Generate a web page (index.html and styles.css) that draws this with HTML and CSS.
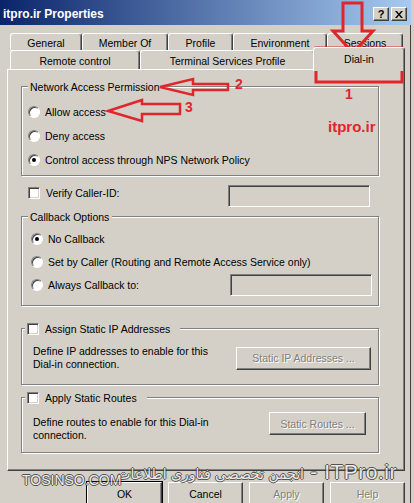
FILE: index.html
```html
<!DOCTYPE html>
<html lang="en">
<head>
    <meta charset="UTF-8">
    <meta name="viewport" content="width=device-width, initial-scale=1.0">
    <title>itpro.ir Properties</title>
    <link rel="stylesheet" href="styles.css">
</head>
<body>
    <div class="dialog">
        <div class="titlebar">
            <span class="title">itpro.ir Properties</span>
            <div class="caption-btns">
                <span class="cap-btn">?</span>
                <span class="cap-btn">
                    <svg width="8" height="7" viewBox="0 0 8 7"><path d="M0 0h2l2 2.5L6 0h2L5 3.5 8 7H6L4 4.5 2 7H0l3-3.5z" fill="#000"/></svg>
                </span>
            </div>
        </div>

        <div class="tabs">
            <div class="tab-row back">
                <div class="tab t-general">General</div>
                <div class="tab t-member">Member Of</div>
                <div class="tab t-profile">Profile</div>
                <div class="tab t-env">Environment</div>
                <div class="tab t-sessions">Sessions</div>
            </div>
            <div class="tab-row front">
                <div class="tab t-remote">Remote control</div>
                <div class="tab t-terminal">Terminal Services Profile</div>
                <div class="tab t-dialin selected">Dial-in</div>
            </div>
        </div>

        <div class="panel">
            <div class="group g-access">
                <div class="legend">Network Access Permission</div>
                <div class="options">
                    <div class="opt"><span class="radio"></span>Allow access</div>
                    <div class="opt"><span class="radio"></span>Deny access</div>
                    <div class="opt"><span class="radio on"></span>Control access through NPS Network Policy</div>
                </div>
            </div>

            <div class="verify-row">
                <div class="check-label"><span class="check"></span>Verify Caller-ID:</div>
                <div class="field"></div>
            </div>

            <div class="group g-callback">
                <div class="legend">Callback Options</div>
                <div class="options">
                    <div class="opt"><span class="radio on"></span>No Callback</div>
                    <div class="opt"><span class="radio"></span>Set by Caller (Routing and Remote Access Service only)</div>
                    <div class="opt"><span class="radio"></span>Always Callback to:<div class="field callback-field"></div></div>
                </div>
            </div>

            <div class="group g-static-ip">
                <div class="legend check-legend"><span class="check"></span>Assign Static IP Addresses</div>
                <div class="group-body">
                    <div class="desc">Define IP addresses to enable for this<br>Dial-in connection.</div>
                    <div class="btn disabled btn-ip">Static IP Addresses ...</div>
                </div>
            </div>

            <div class="group g-routes">
                <div class="legend check-legend"><span class="check"></span>Apply Static Routes</div>
                <div class="group-body">
                    <div class="desc">Define routes to enable for this Dial-in<br>connection.</div>
                    <div class="btn disabled btn-routes">Static Routes ...</div>
                </div>
            </div>
        </div>

        <div class="actions">
            <div class="btn default">OK</div>
            <div class="btn">Cancel</div>
            <div class="btn disabled">Apply</div>
            <div class="btn disabled">Help</div>
        </div>

        <div class="watermark">
            <div class="wm-line"><span class="wm-fa">انجمن تخصصی فناوری اطلاعات</span><span class="wm-en"> - ITPro.ir</span></div>
            <div class="wm-site">TOSINSO.COM</div>
        </div>

        <svg class="annotations" width="414" height="503" viewBox="0 0 414 503">
            <g fill="none" stroke="#e0262d" stroke-width="3" stroke-linejoin="miter">
                <path d="M343 3H362V31H373L353 53L333 31H343Z"/>
                <rect x="316" y="48" width="86" height="34"/>
                <path d="M160 87L193 79V84H228V90H193V95Z" stroke-width="2.5"/>
                <path d="M108 111L142 100V104H180V114H142V121Z" stroke-width="2.5"/>
            </g>
            <g fill="#e0262d" font-family="Liberation Sans, Arial, sans-serif" font-weight="bold">
                <text x="345" y="99" font-size="14">1</text>
                <text x="235" y="89" font-size="14">2</text>
                <text x="185" y="112" font-size="14">3</text>
                <text x="328" y="132" font-size="15">itpro.ir</text>
            </g>
        </svg>
    </div>
</body>
</html>
```

FILE: styles.css
```css
* {
    box-sizing: border-box;
}

body {
    margin: 0;
    background-color: #d4d0c8;
    font-family: "Liberation Sans", Arial, sans-serif;
    font-size: 10.5px;
    color: #000;
}

.dialog {
    position: relative;
    width: 414px;
    height: 503px;
    overflow: hidden;
    background-color: #d4d0c8;
    box-shadow: inset -3px 0 0 #d4d0c8, inset -4px 0 0 #404040;
}

/* title bar */
.titlebar {
    height: 25px;
    margin-right: 3px;
    padding: 3px 4px 0 3px;
    display: flex;
    align-items: center;
    background: linear-gradient(to right, #0a246a, #a6caf0);
}

.title {
    color: #fff;
    font-weight: bold;
    font-size: 12px;
}

.caption-btns {
    margin-left: auto;
    display: flex;
    gap: 2px;
}

.cap-btn {
    width: 16px;
    height: 14px;
    display: flex;
    align-items: center;
    justify-content: center;
    background-color: #d4d0c8;
    border: 1px solid;
    border-color: #fff #404040 #404040 #fff;
    box-shadow: inset -1px -1px 0 #808080;
    font-weight: bold;
    font-size: 11px;
    line-height: 1;
}

/* tabs */
.tabs {
    padding: 8px 0 0 10px;
}

.tab-row {
    display: flex;
}

.tab-row.back {
    height: 17px;
}

.tab-row.front {
    height: 19px;
}

.tab {
    text-align: center;
    line-height: 13px;
    background-color: #d4d0c8;
    border: 1px solid;
    border-color: #fff #404040 transparent #fff;
    border-bottom: none;
    border-radius: 3px 3px 0 0;
    box-shadow: inset -1px 0 0 #808080;
}

.back .tab {
    padding-top: 3px;
}

.front .tab {
    padding-top: 4px;
}

.t-general { width: 72px; }
.t-member { width: 86px; }
.t-profile { width: 65px; }
.t-env { width: 94px; }
.t-sessions { width: 76px; }
.t-remote { width: 130px; }
.t-terminal { width: 175px; }
.t-dialin { width: 88px; }

.tab.selected {
    position: relative;
    z-index: 1;
    width: 92px;
    height: 24px;
    margin: -3px -2px 0 -2px;
    padding-top: 5px;
}

/* panel */
.panel {
    margin-left: 7px;
    width: 398px;
    height: 402px;
    padding-left: 13px;
    border: 1px solid;
    border-color: #fff #404040 #404040 #fff;
    box-shadow: inset -1px -1px 0 #808080;
}

.group {
    width: 358px;
    border: 1px solid #808080;
    box-shadow: inset 1px 1px 0 #fff, 1px 1px 0 #fff;
}

.legend {
    display: flex;
    align-items: center;
    width: max-content;
    height: 13px;
    margin: -7px 0 0 6px;
    padding: 0 3px 0 2px;
    background-color: #d4d0c8;
}

.legend.check-legend {
    margin-left: 3px;
    padding-right: 10px;
}

.opt {
    display: flex;
    align-items: center;
    height: 24px;
    padding-left: 6px;
}

.radio {
    position: relative;
    flex: none;
    width: 12px;
    height: 12px;
    margin-right: 5px;
    border-radius: 50%;
    background-color: #fff;
    border: 1px solid;
    border-color: #808080 #fff #fff #808080;
    box-shadow: inset 1px 1px 0 #404040;
}

.radio.on::after {
    content: "";
    position: absolute;
    left: 3px;
    top: 3px;
    width: 4px;
    height: 4px;
    border-radius: 50%;
    background-color: #000;
}

.check {
    flex: none;
    width: 12px;
    height: 12px;
    margin-right: 6px;
    background-color: #fff;
    border: 1px solid;
    border-color: #808080 #fff #fff #808080;
    box-shadow: inset 1px 1px 0 #404040, inset -1px -1px 0 #d4d0c8;
}

.field {
    width: 142px;
    height: 22px;
    background-color: #d4d0c8;
    border: 1px solid;
    border-color: #808080 #fff #fff #808080;
    box-shadow: inset 1px 1px 0 #404040, inset -1px -1px 0 #d4d0c8;
}

/* network access permission */
.g-access {
    margin-top: 16px;
    padding-bottom: 3px;
}

.g-access .options {
    padding-top: 7px;
}

/* verify caller id */
.verify-row {
    display: flex;
    width: 358px;
    height: 22px;
    margin-top: 9px;
    padding-left: 7px;
}

.check-label {
    display: flex;
    align-items: center;
    height: 16px;
}

.verify-row .field {
    margin-left: auto;
    margin-right: 9px;
}

/* callback options */
.g-callback {
    margin-top: 9px;
    padding-bottom: 9px;
}

.g-callback .options {
    padding-top: 4px;
}

.g-callback .opt {
    height: 23px;
    padding-left: 9px;
}

.g-callback .callback-field {
    margin-left: auto;
    margin-right: 6px;
}

/* static ip / routes */
.group-body {
    display: flex;
    padding-left: 11px;
}

.desc {
    line-height: 13px;
}

.g-static-ip {
    margin-top: 22px;
    padding-bottom: 13px;
}

.g-static-ip .group-body {
    align-items: center;
    padding-top: 10px;
}

.g-routes {
    margin-top: 12px;
    padding-bottom: 10px;
}

.g-routes .group-body {
    padding-top: 8px;
}

.g-routes .desc {
    margin-top: 4px;
}

.btn {
    display: flex;
    align-items: center;
    justify-content: center;
    width: 75px;
    height: 23px;
    background-color: #d4d0c8;
    border: 1px solid;
    border-color: #fff #404040 #404040 #fff;
    box-shadow: inset -1px -1px 0 #808080;
}

.btn.disabled {
    color: #808080;
    text-shadow: 1px 1px 0 #fff;
}

.btn.default {
    outline: 1px solid #000;
}

.btn-ip {
    width: 135px;
    margin-left: auto;
    margin-right: 7px;
}

.btn-routes {
    width: 97px;
    margin-left: auto;
    margin-right: 12px;
}

/* bottom buttons */
.actions {
    display: flex;
    gap: 6px;
    margin-top: 11px;
    padding-left: 87px;
}

/* overlays */
.watermark {
    position: absolute;
    left: 0;
    top: 0;
    width: 414px;
    height: 503px;
    pointer-events: none;
    color: #f2f2f2;
    opacity: 0.8;
    text-shadow: 1px 0 0 #333, -1px 0 0 #333, 0 1px 0 #333, 0 -1px 0 #333;
}

.wm-line {
    position: absolute;
    right: 17px;
    top: 460px;
    display: flex;
    align-items: baseline;
    white-space: nowrap;
    line-height: 24px;
}

.wm-fa {
    font-family: "DejaVu Sans", "Liberation Sans", sans-serif;
    font-size: 14px;
}

.wm-en {
    font-size: 21px;
    letter-spacing: 0.5px;
    white-space: pre;
}

.wm-site {
    position: absolute;
    left: 22px;
    top: 472px;
    font-size: 14px;
    line-height: 16px;
}

.annotations {
    position: absolute;
    left: 0;
    top: 0;
    pointer-events: none;
}
```
